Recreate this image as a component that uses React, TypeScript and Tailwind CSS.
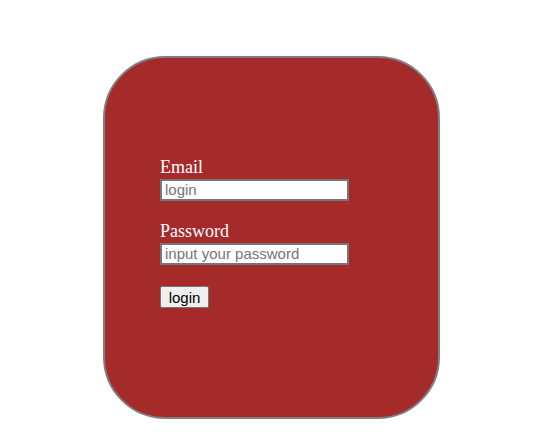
import React from 'react';

const labelClass =
  "block font-['Liberation_Serif',serif] text-[18px] leading-[21px] text-white";
const inputClass =
  "mt-[1px] h-[22px] w-[189px] border-2 border-[#767676] bg-white pl-[3px] pr-[2px] font-['Liberation_Sans',Arial,sans-serif] text-[15px] text-black outline-none placeholder:text-[#757575]";

export default function App() {
  return (
    <div className="min-h-[437px] w-full bg-white pt-[56px] pl-[103px]">
      {/* Login card */}
      <div className="flex h-[363px] w-[337px] flex-col items-start rounded-[62px] border-2 border-[#808080] bg-[#a52a2a] pt-[99px] pl-[55px]">
        <label htmlFor="email" className={labelClass}>
          Email
        </label>
        <input id="email" type="text" placeholder="login" className={inputClass} />

        <label htmlFor="password" className={`${labelClass} mt-[20px]`}>
          Password
        </label>
        <input
          id="password"
          type="password"
          placeholder="input your password"
          className={inputClass}
        />

        <button
          type="button"
          className="mt-[21px] h-[22px] w-[49px] rounded-[2px] border border-[#767676] bg-[#efefef] px-[6px] font-['Liberation_Sans',Arial,sans-serif] text-[15px] leading-[17px] text-black"
        >
          login
        </button>
      </div>
    </div>
  );
}
